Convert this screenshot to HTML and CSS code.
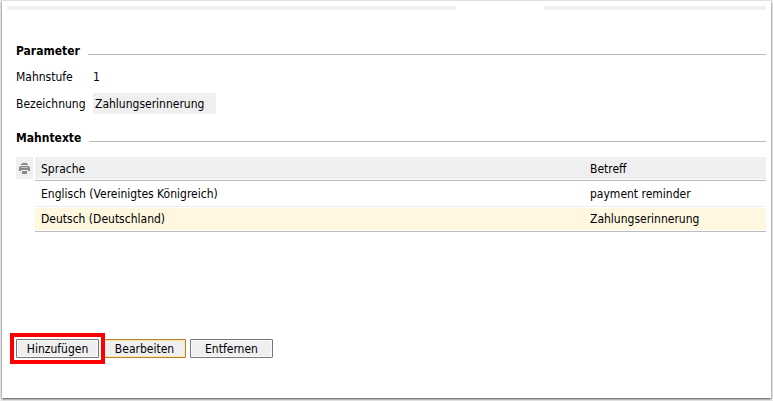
FILE: index.html
```
<!DOCTYPE html>
<html lang="de">
<head>
<meta charset="utf-8">
<title>Mahnstufe</title>
<link rel="stylesheet" href="styles.css">
</head>
<body>
<main class="panel">
  <div class="top-rule"><span class="bar bar-left"></span><span class="bar bar-right"></span></div>
  <div class="content">
    <h2 class="section-title">Parameter</h2>
    <div class="field">
      <span class="label">Mahnstufe</span>
      <span class="value">1</span>
    </div>
    <div class="field field-input">
      <label class="label" for="bez">Bezeichnung</label>
      <input class="text-input" id="bez" type="text" value="Zahlungserinnerung">
    </div>
    <h2 class="section-title">Mahntexte</h2>
    <table class="texts">
      <thead>
        <tr>
          <th class="tool">
            <button class="print" type="button" aria-label="Drucken">
              <svg width="11" height="11" viewBox="0 0 11 11" shape-rendering="crispEdges" aria-hidden="true">
                <path fill="#898989" d="M3 0h5v1h1v1H2V1h1zM1 3h9v1h1v4H9V7H2v1H0V4h1zM3 8h5v3H3z"/>
                <path fill="#c4c4c4" d="M2 4h7v1H2z"/>
                <path fill="#efefef" d="M2 7h7v1H2z"/>
              </svg>
            </button>
          </th>
          <th class="cell language">Sprache</th>
          <th class="cell">Betreff</th>
        </tr>
      </thead>
      <tbody>
        <tr>
          <td></td>
          <td class="cell">Englisch (Vereinigtes Königreich)</td>
          <td class="cell">payment reminder</td>
        </tr>
        <tr class="selected">
          <td></td>
          <td class="cell">Deutsch (Deutschland)</td>
          <td class="cell">Zahlungserinnerung</td>
        </tr>
      </tbody>
    </table>
    <div class="actions">
      <button class="btn marked" type="button">Hinzufügen</button>
      <button class="btn focused" type="button">Bearbeiten</button>
      <button class="btn" type="button">Entfernen</button>
    </div>
  </div>
</main>
</body>
</html>
```
FILE: styles.css
```
* {
  box-sizing: border-box;
}

body {
  margin: 0;
  padding: 1px 2px 3px;
  min-height: 100vh;
  display: flex;
  background: #ececec;
  color: #000;
  font: 12px/16px "DejaVu Sans Condensed", "DejaVu Sans", sans-serif;
}

.panel {
  flex: 1;
  padding: 5px 5px 0;
  background: #fff;
  box-shadow: 0 1px 2px rgba(0, 0, 0, 0.7);
}

.top-rule {
  display: flex;
  gap: 88px;
  height: 4px;
}

.bar {
  background: #f0f0f0;
}

.bar-left {
  flex: 449;
}

.bar-right {
  flex: 222;
}

.content {
  padding: 32px 0 0 9px;
}

.section-title {
  display: flex;
  align-items: center;
  gap: 8px;
  margin: 0;
  font-size: 12px;
  line-height: 18px;
}

.section-title::after {
  content: "";
  flex: 1;
  height: 1px;
  margin-top: 7px;
  background: #b9b9b9;
}

.field {
  display: flex;
  align-items: center;
  margin-top: 9px;
}

.field-input {
  margin: 8px 0 15px;
}

.label {
  width: 77px;
}

.text-input {
  width: 123px;
  height: 21px;
  padding: 0 2px;
  border: 0;
  background: #efefef;
  color: inherit;
  font: inherit;
}

.texts {
  width: 100%;
  margin-top: 10px;
  border-collapse: separate;
  border-spacing: 0;
}

.texts th {
  font-weight: normal;
  text-align: left;
}

.tool {
  width: 19px;
  padding: 0 2px 2px 0;
}

.print {
  display: flex;
  align-items: center;
  justify-content: center;
  width: 17px;
  height: 22px;
  padding: 0;
  border: 0;
  background: #efefef;
}

.cell {
  height: 26px;
  padding: 0 6px;
  border-bottom: 1px solid #ededed;
}

th.cell {
  height: 24px;
  border-color: #bcbcbc;
  background: #efefef;
  box-shadow: inset 0 -1px #fff;
}

.language {
  width: 549px;
}

.selected .cell {
  height: 25px;
  border-color: #bcbcbc;
  background: #fff7df;
  box-shadow: inset 0 1px #fff, inset 0 -1px #fff;
}

.actions {
  display: flex;
  gap: 4px;
  margin-top: 107px;
}

.btn {
  width: 83px;
  height: 19px;
  padding: 0;
  border: 1px solid #777;
  border-radius: 1px;
  background: #efefef;
  box-shadow: inset 0 0 0 1px #fafafa;
  color: inherit;
  font: inherit;
}

.focused {
  border-color: #b87d32;
  box-shadow: inset 0 0 0 1px #ffeba8;
}

.marked {
  position: relative;
}

.marked::after {
  content: "";
  position: absolute;
  inset: -7px;
  border: 4px solid #f00;
}
```
